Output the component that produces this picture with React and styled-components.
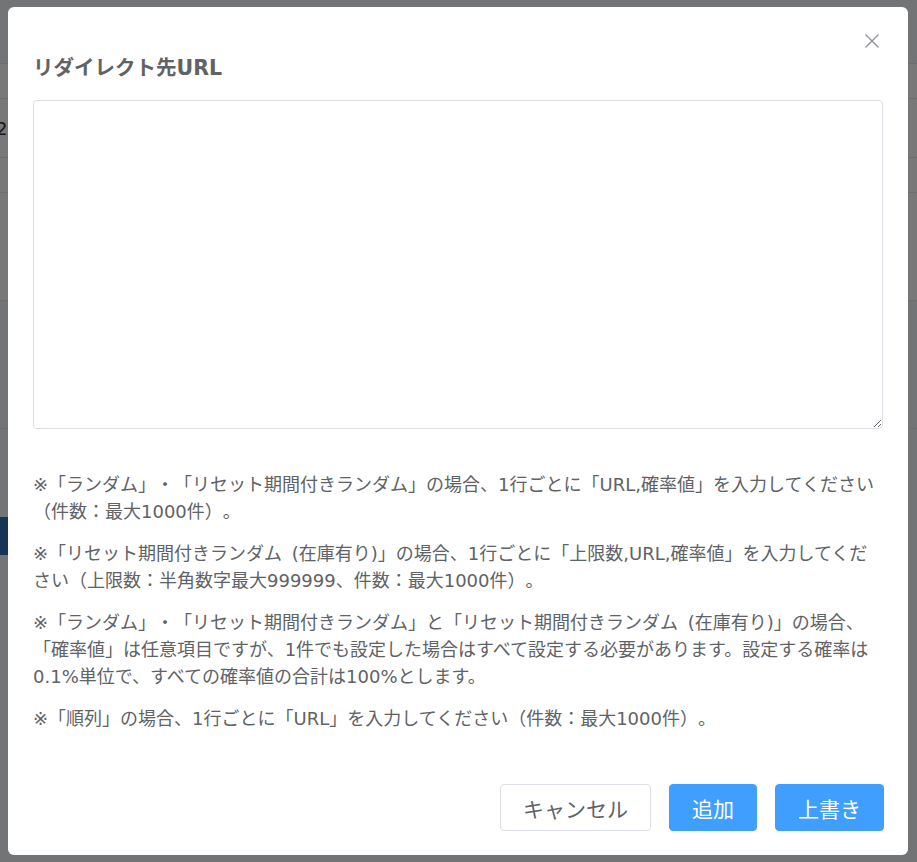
import styled, { createGlobalStyle } from 'styled-components'

const GlobalStyle = createGlobalStyle`
  html, body {
    margin: 0;
    padding: 0;
  }
  body {
    font-family: "DejaVu Sans", "Noto Sans CJK JP", sans-serif;
    background: #fff;
    text-spacing-trim: space-all;
  }
`

const Page = styled.main`
  height: 862px;
  overflow: hidden;
  background: #f5f6f8;
`

const TableRow = styled.div`
  height: ${p => p.$h}px;
  box-sizing: border-box;
  border-bottom: 1px solid #e4e7ed;
  background: ${p => (p.$head ? '#f5f6f8' : '#fff')};
  display: flex;
  align-items: center;
  font-size: 18px;
  color: #303133;
  margin-left: -4px;
`

const PageButton = styled.button`
  margin-top: 88px;
  margin-left: -62px;
  height: 38px;
  padding: 0 20px;
  border: none;
  background: #2f6fb8;
  color: #fff;
  font-size: 18px;
  font-family: inherit;
`

const Overlay = styled.div`
  position: fixed;
  inset: 0;
  background: rgba(0, 0, 0, 0.53);
  display: flex;
  align-items: flex-start;
  padding: 7px 0 0 8px;
`

const Dialog = styled.section`
  position: relative;
  width: 900px;
  box-sizing: border-box;
  background: #fff;
  border-radius: 6px;
  padding: 0 25px 24px;
`

const Title = styled.h2`
  margin: 0;
  padding-top: 47px;
  font-size: 20.5px;
  line-height: 28px;
  font-weight: bold;
  color: #606266;
`

const CloseButton = styled.button`
  position: absolute;
  top: 27px;
  right: 29px;
  width: 14px;
  height: 14px;
  padding: 0;
  border: none;
  background: none;
  cursor: pointer;
  display: flex;
`

const UrlInput = styled.textarea`
  display: block;
  width: 100%;
  height: 329px;
  margin-top: 18px;
  box-sizing: border-box;
  border: 1px solid #dcdfe6;
  border-radius: 4px;
  padding: 8px 15px;
  font-family: inherit;
  font-size: 18px;
  color: #606266;
  resize: vertical;
  outline: none;
`

const Notes = styled.div`
  margin-top: 42px;
`

const Note = styled.p`
  margin: 0 0 15px;
  font-size: 18px;
  line-height: 27px;
  word-spacing: 4px;
  color: #606266;

  &:last-child {
    margin-bottom: 0;
  }
`

const Footer = styled.footer`
  display: flex;
  justify-content: flex-end;
  gap: 18px;
  margin-top: 52px;
  margin-right: -1px;
`

const Button = styled.button`
  height: 47px;
  padding: 0 22px;
  box-sizing: border-box;
  border-radius: 4px;
  border: 1px solid ${p => (p.$primary ? '#409eff' : '#dcdfe6')};
  background: ${p => (p.$primary ? '#409eff' : '#fff')};
  color: ${p => (p.$primary ? '#fff' : '#606266')};
  font-family: inherit;
  font-size: 21px;
  cursor: pointer;
`

const rows = [
  { h: 64, head: true },
  { h: 35 },
  { h: 59, text: '2023/10/01' },
  { h: 35 },
  { h: 108 },
  { h: 128, head: true },
]

export default function App() {
  return (
    <>
      <GlobalStyle />
      <Page>
        {rows.map((r, i) => (
          <TableRow key={i} $h={r.h} $head={r.head}>
            {r.text}
          </TableRow>
        ))}
        <PageButton>追加</PageButton>
      </Page>
      <Overlay>
        <Dialog>
          <Title>リダイレクト先URL</Title>
          <CloseButton aria-label="閉じる">
            <svg width="14" height="14" viewBox="0 0 14 14">
              <path d="M0.5 0.5L13.5 13.5M13.5 0.5L0.5 13.5" stroke="#909399" strokeWidth="1.4" fill="none" />
            </svg>
          </CloseButton>
          <UrlInput />
          <Notes>
            <Note>
              ※「ランダム」・「リセット期間付きランダム」の場合、1行ごとに「URL,確率値」を入力してください（件数：最大1000件）。
            </Note>
            <Note>
              ※「リセット期間付きランダム (在庫有り)」の場合、1行ごとに「上限数,URL,確率値」を入力してください（上限数：半角数字最大999999、件数：最大1000件）。
            </Note>
            <Note>
              ※「ランダム」・「リセット期間付きランダム」と「リセット期間付きランダム (在庫有り)」の場合、「確率値」は任意項目ですが、1件でも設定した場合はすべて設定する必要があります。設定する確率は0.1%単位で、すべての確率値の合計は100%とします。
            </Note>
            <Note>※「順列」の場合、1行ごとに「URL」を入力してください（件数：最大1000件）。</Note>
          </Notes>
          <Footer>
            <Button>キャンセル</Button>
            <Button $primary>追加</Button>
            <Button $primary>上書き</Button>
          </Footer>
        </Dialog>
      </Overlay>
    </>
  )
}
